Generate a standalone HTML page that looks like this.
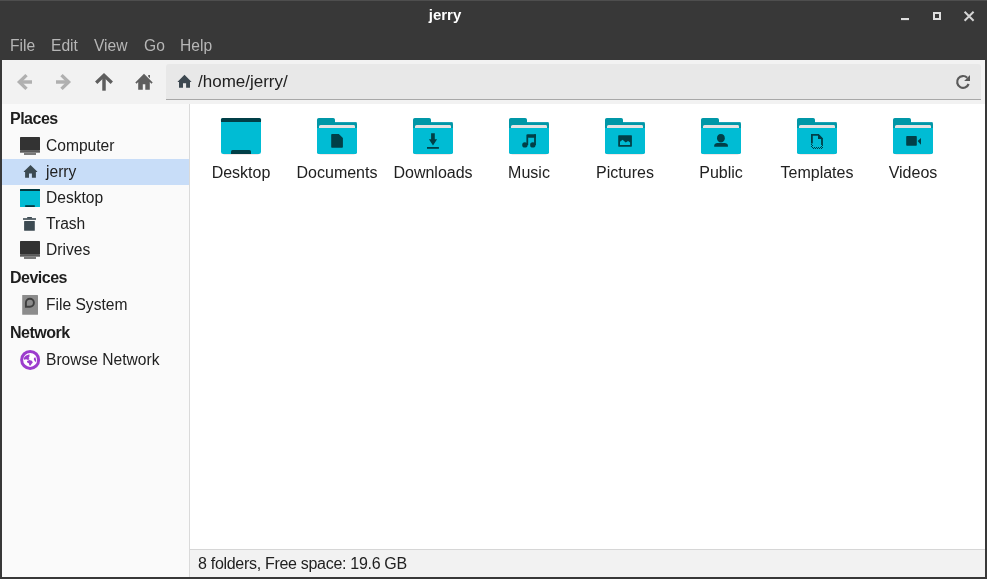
<!DOCTYPE html>
<html><head><meta charset="utf-8">
<style>
html,body{margin:0;padding:0;}
body{width:987px;height:579px;position:relative;overflow:hidden;background:#383838;font-family:"Liberation Sans",sans-serif;}
.abs{position:absolute;will-change:transform;white-space:nowrap;}
#topline{left:0;top:0;width:987px;height:1px;background:#4e4e4e;}
#title{left:0;width:890px;top:5px;text-align:center;color:#fff;font-weight:bold;font-size:15px;line-height:20px;}
.menu{top:37px;color:#b6b6b6;font-size:15.6px;line-height:18px;}
#content{left:2px;top:60px;width:983px;height:517px;background:#f2f2f2;}
#path{left:166px;top:64px;width:815px;height:35px;background:#e8e8e8;border-radius:3px 3px 0 0;border-bottom:1px solid #a8a8a8;}
#pathtxt{left:198px;top:72px;font-size:17px;line-height:20px;color:#212121;}
#side{left:2px;top:104px;width:187px;height:473px;background:#fafafa;border-right:1px solid #dadada;}
#view{left:190px;top:104px;width:795px;height:445px;background:#fff;}
#status{left:190px;top:549px;width:795px;height:28px;background:#f2f2f2;border-top:1px solid #d6d6d6;box-sizing:border-box;}
#stattxt{left:198px;top:554.5px;font-size:16px;letter-spacing:-0.3px;line-height:18px;color:#212121;}
.hdr{left:10px;font-weight:bold;font-size:16px;letter-spacing:-0.5px;line-height:18px;color:#1e1e1e;}
.item{left:46px;font-size:15.6px;line-height:18px;color:#212121;}
#sel{left:2px;top:159px;width:187px;height:26px;background:#c8ddf8;}
.lbl{top:164px;width:96px;text-align:center;font-size:16px;line-height:18px;color:#212121;}
svg{position:absolute;overflow:visible;}
</style></head><body>
<div id="topline" class="abs"></div>
<div id="title" class="abs">jerry</div>
<svg style="left:0;top:0" width="987" height="32">
  <rect x="901" y="18" width="8" height="2.1" fill="#dedede"/>
  <rect x="934" y="13" width="6" height="6" fill="none" stroke="#dedede" stroke-width="2"/>
  <path d="M964.6 11.8 L973.6 20.8 M973.6 11.8 L964.6 20.8" stroke="#d4d4d4" stroke-width="2"/>
</svg>
<div class="abs menu" style="left:10px">File</div>
<div class="abs menu" style="left:51px">Edit</div>
<div class="abs menu" style="left:94px">View</div>
<div class="abs menu" style="left:144px">Go</div>
<div class="abs menu" style="left:180px">Help</div>

<div id="content" class="abs"></div>
<div id="path" class="abs"></div>
<div id="pathtxt" class="abs">/home/jerry/</div>
<div id="side" class="abs"></div>
<div id="view" class="abs"></div>
<div id="status" class="abs"></div>
<div id="stattxt" class="abs">8 folders, Free space: 19.6 GB</div>

<!-- toolbar icons -->
<svg style="left:0;top:0" width="987" height="104">
  <path d="M26.5 75.1 L19.4 82 L26.5 88.9" fill="none" stroke="#b0b0b0" stroke-width="3.4"/>
  <path d="M19.6 82 H32" fill="none" stroke="#b0b0b0" stroke-width="3.5"/>
  <path d="M61.5 75.1 L68.6 82 L61.5 88.9" fill="none" stroke="#b0b0b0" stroke-width="3.4"/>
  <path d="M68.4 82 H56" fill="none" stroke="#b0b0b0" stroke-width="3.5"/>
  <path d="M96.2 82.8 L104 75.2 L111.8 82.8" fill="none" stroke="#5e5e5e" stroke-width="3.3"/>
  <path d="M104 76 V90.7" fill="none" stroke="#5e5e5e" stroke-width="3.5"/>
  <path d="M144 73.7 L152.7 82.4 L151.4 83.7 L149.8 82.1 V89.7 H145.3 V84.3 H142.8 V89.7 H138.2 V82.1 L136.6 83.7 L135.3 82.4 Z" fill="#5e5e5e"/>
  <path d="M148.2 75 H150 V78.2 L148.2 76.4 Z" fill="#5e5e5e"/>
  <path d="M184.5 74.8 L191.4 81.7 V82.1 H190 V87.8 H186.1 V83.3 H183 V87.8 H179 V82.1 H177.6 V81.7 Z" fill="#3d4850"/>
  <path d="M968.6 84 A5.9 5.9 0 1 1 967.2 77.7" fill="none" stroke="#5a5a5a" stroke-width="2.2"/>
  <path d="M970 75 V81 H964.2 Z" fill="#5a5a5a"/>
</svg>

<!-- sidebar -->
<div id="sel" class="abs"></div>
<div class="abs hdr" style="top:110px">Places</div>
<div class="abs item" style="top:137px">Computer</div>
<div class="abs item" style="top:163px">jerry</div>
<div class="abs item" style="top:189px">Desktop</div>
<div class="abs item" style="top:215px">Trash</div>
<div class="abs item" style="top:241px">Drives</div>
<div class="abs hdr" style="top:269px">Devices</div>
<div class="abs item" style="top:296px">File System</div>
<div class="abs hdr" style="top:324px">Network</div>
<div class="abs item" style="top:351px">Browse Network</div>

<svg style="left:0;top:0" width="190" height="380">
  <!-- computer -->
  <rect x="20" y="137" width="20" height="13.7" rx="0.6" fill="#333"/>
  <rect x="20" y="150.7" width="20" height="2" fill="#5a5a5a"/>
  <rect x="24" y="152.7" width="12" height="2.3" fill="#7a7a7a"/>
  <!-- home -->
  <path d="M30.5 164.9 L37.2 171.5 V171.9 H35.9 V177.8 H31.9 V173.5 H29 V177.8 H25.1 V171.9 H23.8 V171.5 Z" fill="#3c4a52"/>
  <!-- desktop -->
  <rect x="20" y="189" width="20" height="18" rx="0.6" fill="#00bcd4"/>
  <path d="M20 191 V189.6 Q20 189 20.6 189 H39.4 Q40 189 40 189.6 V191 Z" fill="#013a42"/>
  <rect x="25.2" y="205.2" width="9.6" height="1.8" fill="#013a42"/>
  <!-- trash -->
  <rect x="23" y="218.2" width="13" height="1.6" fill="#3c4a52"/>
  <rect x="27.2" y="217" width="4.7" height="1.5" fill="#3c4a52"/>
  <rect x="24.1" y="221.1" width="10.7" height="9.6" rx="0.5" fill="#3c4a52"/>
  <!-- drives -->
  <rect x="20" y="241" width="20" height="13.7" rx="0.6" fill="#333"/>
  <rect x="20" y="254.7" width="20" height="2" fill="#5a5a5a"/>
  <rect x="24" y="256.7" width="12" height="2.3" fill="#7a7a7a"/>
  <!-- file system -->
  <rect x="22.2" y="295.1" width="15.8" height="19.6" rx="0.5" fill="#8c8c8c"/>
  <path d="M25.9 302.8 A4 4 0 1 1 29.9 306.8 H25.9 Z" fill="none" stroke="#3e3e3e" stroke-width="1.9"/>
  <!-- network -->
  <circle cx="30.15" cy="359.9" r="8.5" fill="#fff" stroke="#9c3ccd" stroke-width="3"/>
  <path d="M23.85 357.99 L25.65 355.75 L29.46 354.18 L29.46 356.65 L28.56 357.99 L29.68 359.11 L28.11 360.01 L26.09 359.34 L24.08 359.79 Z" fill="#9c3ccd"/>
  <path d="M26.99 360.91 L29.46 360.01 L31.93 360.68 L32.82 362.48 L31.48 364.05 L30.36 365.84 L29.46 365.39 L28.79 363.37 L27.22 362.48 Z" fill="#9c3ccd"/>
  <path d="M33.95 357.99 L35.29 357.32 L36.19 360.01 L35.96 362.03 L34.84 361.36 L33.95 359.56 Z" fill="#9c3ccd"/>
</svg>

<!-- main icons -->
<svg style="left:0;top:0" width="987" height="200">
  
  <!-- desktop -->
  <path d="M223 154.8 H259 Q259.5 156.4 257.5 156.6 H224.5 Q222.5 156.4 223 154.8 Z" fill="#f0dede" transform="translate(0,-1.8)"/>
  <rect x="221" y="118" width="40" height="36" rx="2.2" fill="#00bcd4"/>
  <path d="M221 122 V119.6 Q221 118 222.6 118 H259.4 Q261 118 261 119.6 V122 Z" fill="#013f47"/>
  <path d="M231 154 V151.6 Q231 150 232.6 150 H249.4 Q251 150 251 151.6 V154 Z" fill="#013f47"/>
  <!-- documents -->
  <g transform="translate(317,118)">
      <path d="M2 35.2 H38 Q38.5 36.6 36.5 36.8 H3.5 Q1.5 36.6 2 35.2 Z" fill="#f0dede"/>
      <path d="M0 1.8 Q0 0 1.8 0 H16.2 Q18 0 18 1.8 V4 H38.2 Q40 4 40 5.8 V33.5 Q40 36 37.5 36 H2.5 Q0 36 0 33.5 Z" fill="#0097a7"/>
      <path d="M18 4 H38.2 Q39.5 4 39.8 5 H18 Z" fill="#1ea2b5"/>
      <path d="M2 8.6 Q2 7 3.6 7 H36.6 Q38 7 38 8.4 V12 H2 Z" fill="#e6e3e3"/>
      <path d="M0 10 H40 V33.5 Q40 36 37.5 36 H2.5 Q0 36 0 33.5 Z" fill="#00bcd4"/>
    </g>
  <path d="M332 134 H338.8 L342.9 138.1 V147 Q342.9 147.8 342.1 147.8 H332 Q331.2 147.8 331.2 147 V134.8 Q331.2 134 332 134 Z" fill="#013f47"/>
  <!-- downloads -->
  <g transform="translate(413,118)">
      <path d="M2 35.2 H38 Q38.5 36.6 36.5 36.8 H3.5 Q1.5 36.6 2 35.2 Z" fill="#f0dede"/>
      <path d="M0 1.8 Q0 0 1.8 0 H16.2 Q18 0 18 1.8 V4 H38.2 Q40 4 40 5.8 V33.5 Q40 36 37.5 36 H2.5 Q0 36 0 33.5 Z" fill="#0097a7"/>
      <path d="M18 4 H38.2 Q39.5 4 39.8 5 H18 Z" fill="#1ea2b5"/>
      <path d="M2 8.6 Q2 7 3.6 7 H36.6 Q38 7 38 8.4 V12 H2 Z" fill="#e6e3e3"/>
      <path d="M0 10 H40 V33.5 Q40 36 37.5 36 H2.5 Q0 36 0 33.5 Z" fill="#00bcd4"/>
    </g>
  <path d="M431.1 133.2 H434.8 V139.2 H437.1 L433 145.4 L428.9 139.2 H431.1 Z" fill="#013f47"/>
  <rect x="427" y="147" width="11.9" height="1.8" fill="#013f47"/>
  <!-- music -->
  <g transform="translate(509,118)">
      <path d="M2 35.2 H38 Q38.5 36.6 36.5 36.8 H3.5 Q1.5 36.6 2 35.2 Z" fill="#f0dede"/>
      <path d="M0 1.8 Q0 0 1.8 0 H16.2 Q18 0 18 1.8 V4 H38.2 Q40 4 40 5.8 V33.5 Q40 36 37.5 36 H2.5 Q0 36 0 33.5 Z" fill="#0097a7"/>
      <path d="M18 4 H38.2 Q39.5 4 39.8 5 H18 Z" fill="#1ea2b5"/>
      <path d="M2 8.6 Q2 7 3.6 7 H36.6 Q38 7 38 8.4 V12 H2 Z" fill="#e6e3e3"/>
      <path d="M0 10 H40 V33.5 Q40 36 37.5 36 H2.5 Q0 36 0 33.5 Z" fill="#00bcd4"/>
    </g>
  <path d="M527.2 134.3 H535.9 V137.7 H528.2 Z" fill="#013f47"/>
  <rect x="526.4" y="134.6" width="1.8" height="10.5" fill="#013f47"/>
  <rect x="534.1" y="134.3" width="1.8" height="10.8" fill="#013f47"/>
  <circle cx="524.9" cy="144.9" r="2.7" fill="#013f47"/>
  <circle cx="532.8" cy="144.9" r="2.7" fill="#013f47"/>
  <!-- pictures -->
  <g transform="translate(605,118)">
      <path d="M2 35.2 H38 Q38.5 36.6 36.5 36.8 H3.5 Q1.5 36.6 2 35.2 Z" fill="#f0dede"/>
      <path d="M0 1.8 Q0 0 1.8 0 H16.2 Q18 0 18 1.8 V4 H38.2 Q40 4 40 5.8 V33.5 Q40 36 37.5 36 H2.5 Q0 36 0 33.5 Z" fill="#0097a7"/>
      <path d="M18 4 H38.2 Q39.5 4 39.8 5 H18 Z" fill="#1ea2b5"/>
      <path d="M2 8.6 Q2 7 3.6 7 H36.6 Q38 7 38 8.4 V12 H2 Z" fill="#e6e3e3"/>
      <path d="M0 10 H40 V33.5 Q40 36 37.5 36 H2.5 Q0 36 0 33.5 Z" fill="#00bcd4"/>
    </g>
  <rect x="618.2" y="135.3" width="13.7" height="11.4" rx="0.6" fill="#013f47"/>
  <path d="M620 144.9 V141.8 L622.6 139.7 L625.7 142.6 L628.1 141 L630.1 142.6 V144.9 Z" fill="#00bcd4"/>
  <!-- public -->
  <g transform="translate(701,118)">
      <path d="M2 35.2 H38 Q38.5 36.6 36.5 36.8 H3.5 Q1.5 36.6 2 35.2 Z" fill="#f0dede"/>
      <path d="M0 1.8 Q0 0 1.8 0 H16.2 Q18 0 18 1.8 V4 H38.2 Q40 4 40 5.8 V33.5 Q40 36 37.5 36 H2.5 Q0 36 0 33.5 Z" fill="#0097a7"/>
      <path d="M18 4 H38.2 Q39.5 4 39.8 5 H18 Z" fill="#1ea2b5"/>
      <path d="M2 8.6 Q2 7 3.6 7 H36.6 Q38 7 38 8.4 V12 H2 Z" fill="#e6e3e3"/>
      <path d="M0 10 H40 V33.5 Q40 36 37.5 36 H2.5 Q0 36 0 33.5 Z" fill="#00bcd4"/>
    </g>
  <path d="M720.9 134 C723.6 134 724.8 136 724.8 138.2 C724.8 140.6 722.9 142.6 720.9 142.6 C718.9 142.6 717 140.6 717 138.2 C717 136 718.2 134 720.9 134 Z" fill="#013f47"/>
  <path d="M714.2 146.7 V145.6 C714.2 143.6 716.6 143.1 718.4 143.1 H723.4 C725.2 143.1 727.9 143.6 727.9 145.6 V146.7 Z" fill="#013f47"/>
  <!-- templates -->
  <g transform="translate(797,118)">
      <path d="M2 35.2 H38 Q38.5 36.6 36.5 36.8 H3.5 Q1.5 36.6 2 35.2 Z" fill="#f0dede"/>
      <path d="M0 1.8 Q0 0 1.8 0 H16.2 Q18 0 18 1.8 V4 H38.2 Q40 4 40 5.8 V33.5 Q40 36 37.5 36 H2.5 Q0 36 0 33.5 Z" fill="#0097a7"/>
      <path d="M18 4 H38.2 Q39.5 4 39.8 5 H18 Z" fill="#1ea2b5"/>
      <path d="M2 8.6 Q2 7 3.6 7 H36.6 Q38 7 38 8.4 V12 H2 Z" fill="#e6e3e3"/>
      <path d="M0 10 H40 V33.5 Q40 36 37.5 36 H2.5 Q0 36 0 33.5 Z" fill="#00bcd4"/>
    </g>
  <path d="M811.9 143.5 V134.9 H818.4 L822 138.5 V145" fill="none" stroke="#013f47" stroke-width="1.8"/>
  <path d="M818 134 L822.9 138.9 H818 Z" fill="#013f47"/>
  <path d="M811 144 h1 v1 h-1z M812 145 h1 v1 h-1z M811 146 h1 v1 h-1z M812 147 h1 v1 h-1z M813 148 h1 v1 h-1z M815 148 h1 v1 h-1z M817 148 h1 v1 h-1z M819 148 h1 v1 h-1z M821 148 h1 v1 h-1z M814 147 h1 v1 h-1z M816 147 h1 v1 h-1z M818 147 h1 v1 h-1z M820 147 h1 v1 h-1z M822 147 h1 v1 h-1z M821 146 h1 v1 h-1z M822 145 h1 v1 h-1z" fill="#013f47"/>
  <!-- videos -->
  <g transform="translate(893,118)">
      <path d="M2 35.2 H38 Q38.5 36.6 36.5 36.8 H3.5 Q1.5 36.6 2 35.2 Z" fill="#f0dede"/>
      <path d="M0 1.8 Q0 0 1.8 0 H16.2 Q18 0 18 1.8 V4 H38.2 Q40 4 40 5.8 V33.5 Q40 36 37.5 36 H2.5 Q0 36 0 33.5 Z" fill="#0097a7"/>
      <path d="M18 4 H38.2 Q39.5 4 39.8 5 H18 Z" fill="#1ea2b5"/>
      <path d="M2 8.6 Q2 7 3.6 7 H36.6 Q38 7 38 8.4 V12 H2 Z" fill="#e6e3e3"/>
      <path d="M0 10 H40 V33.5 Q40 36 37.5 36 H2.5 Q0 36 0 33.5 Z" fill="#00bcd4"/>
    </g>
  <rect x="906.2" y="136.1" width="10.6" height="9.6" rx="0.8" fill="#013f47"/>
  <path d="M917.6 141 L921 137.9 V144.7 Z" fill="#013f47"/>
</svg>
<div class="abs lbl" style="left:193px">Desktop</div>
<div class="abs lbl" style="left:289px">Documents</div>
<div class="abs lbl" style="left:385px">Downloads</div>
<div class="abs lbl" style="left:481px">Music</div>
<div class="abs lbl" style="left:577px">Pictures</div>
<div class="abs lbl" style="left:673px">Public</div>
<div class="abs lbl" style="left:769px">Templates</div>
<div class="abs lbl" style="left:865px">Videos</div>
</body></html>
